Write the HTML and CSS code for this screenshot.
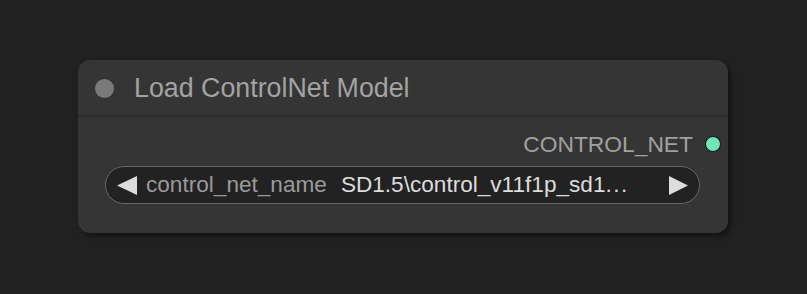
FILE: index.html
```html
<!DOCTYPE html>
<html>
<head>
<meta charset="utf-8">
<link rel="stylesheet" href="styles.css">
</head>
<body>
<div class="node">
  <div class="title">
    <span class="title-dot"></span>
    <span class="title-text">Load ControlNet Model</span>
  </div>
  <div class="body">
    <div class="output">
      <span class="output-label">CONTROL_NET</span>
      <span class="output-dot"></span>
    </div>
    <div class="widget">
      <svg class="arrow" width="20" height="19" viewBox="0 0 20 19"><polygon points="20,0 20,19 0,9.5" fill="#dddddd"/></svg>
      <span class="w-label">control_net_name</span>
      <span class="w-value">SD1.5\control_v11f1p_sd1<span class="dots">...</span></span>
      <svg class="arrow arrow-right" width="19" height="19" viewBox="0 0 19 19"><polygon points="0,0 0,19 19,9.5" fill="#dddddd"/></svg>
    </div>
  </div>
</div>
</body>
</html>
```
FILE: styles.css
```css
html, body {
  margin: 0;
  padding: 0;
  background: #212121;
  width: 807px;
  height: 294px;
  overflow: hidden;
  font-family: "Liberation Sans", Arial, sans-serif;
}
.node {
  margin-left: 78px;
  margin-top: 60px;
  width: 650px;
  height: 173px;
  border-radius: 12px;
  background: #353535;
  box-shadow: 3px 3px 5px rgba(0, 0, 0, 0.45);
  box-sizing: border-box;
}
.title {
  height: 57px;
  box-sizing: border-box;
  border-bottom: 2px solid #2c2c2c;
  display: flex;
  align-items: center;
  padding-left: 17px;
  padding-top: 1px;
}
.title-dot {
  width: 19px;
  height: 19px;
  border-radius: 50%;
  background: #7a7a7a;
  margin-right: 20px;
}
.title-text {
  font-size: 26.8px;
  color: #a3a3a3;
}
.body {
  padding-top: 13px;
}
.output {
  height: 28px;
  display: flex;
  justify-content: flex-end;
  align-items: center;
  padding-right: 7px;
}
.output-label {
  font-size: 22.8px;
  color: #a0a0a0;
  margin-right: 12px;
}
.output-dot {
  width: 14px;
  height: 14px;
  border-radius: 50%;
  background: #6ee7b7;
  border: 1.5px solid #111;
}
.widget {
  margin: 8px 28px 0 27px;
  height: 38px;
  box-sizing: border-box;
  border: 1.5px solid #666;
  border-radius: 19px;
  background: #222;
  display: flex;
  align-items: center;
  padding-left: 11px;
  padding-right: 11px;
}
.arrow {
  flex: none;
}
.w-label {
  font-size: 22.6px;
  color: #9a9a9a;
  margin-left: 9px;
}
.w-value {
  font-size: 22.6px;
  color: #dddddd;
  margin-left: 14px;
  flex: 1;
}
.dots {
  letter-spacing: 1.5px;
}
.arrow-right {
  margin-left: 8px;
}
```
